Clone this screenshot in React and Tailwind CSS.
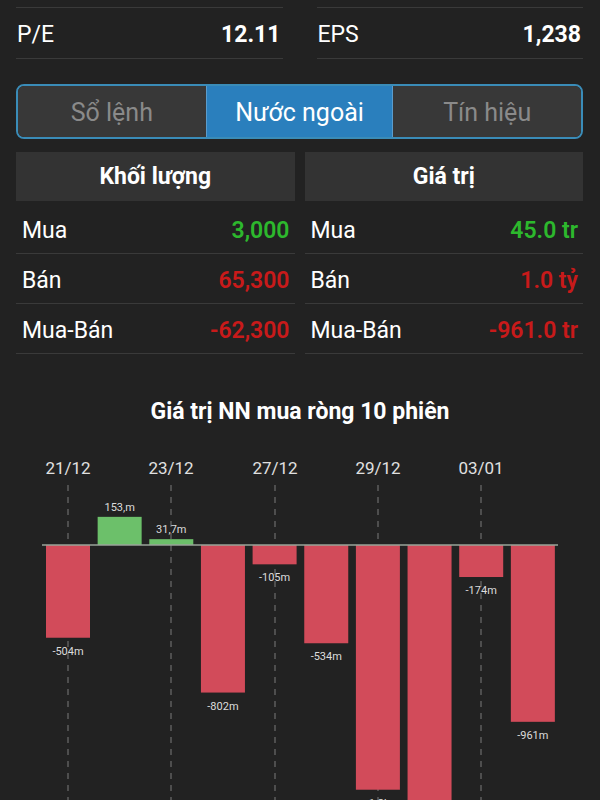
const STATS = [
  { label: 'P/E', value: '12.11' },
  { label: 'EPS', value: '1,238' },
];

const TABS = ['Sổ lệnh', 'Nước ngoài', 'Tín hiệu'];

const TABLES = [
  {
    title: 'Khối lượng',
    rows: [
      { label: 'Mua', value: '3,000', up: true },
      { label: 'Bán', value: '65,300' },
      { label: 'Mua-Bán', value: '-62,300' },
    ],
  },
  {
    title: 'Giá trị',
    rows: [
      { label: 'Mua', value: '45.0 tr', up: true },
      { label: 'Bán', value: '1.0 tỷ' },
      { label: 'Mua-Bán', value: '-961.0 tr' },
    ],
  },
];

const DATES = [
  { x: 68, label: '21/12' },
  { x: 171, label: '23/12' },
  { x: 275, label: '27/12' },
  { x: 378, label: '29/12' },
  { x: 481, label: '03/01' },
];

// giá trị theo triệu đồng
const BARS = [
  { v: -504, label: '-504m' },
  { v: 153, label: '153,m' },
  { v: 31.7, label: '31,7m' },
  { v: -802, label: '-802m' },
  { v: -105, label: '-105m' },
  { v: -534, label: '-534m' },
  { v: -1330, label: '-1.3b' },
  { v: -1700, label: '-1.7b' },
  { v: -174, label: '-174m' },
  { v: -961, label: '-961m' },
];

const TOP = 440;
const BASE = 545 - TOP;
const SCALE = 0.184;

function Chart() {
  return (
    <svg width="600" height="360" className="block">
      {DATES.map((d) => (
        <g key={d.label}>
          <text x={d.x} y={34} textAnchor="middle" fill="#e0e0e0" fontSize="17">
            {d.label}
          </text>
          <line x1={d.x} y1={45} x2={d.x} y2={360} stroke="#7a7a7a" strokeWidth="1" strokeDasharray="6 6" />
        </g>
      ))}
      {BARS.map((b, i) => {
        const x = 46 + i * 51.65;
        const h = Math.abs(b.v) * SCALE;
        const up = b.v > 0;
        const y = up ? BASE - h : BASE;
        return (
          <g key={i}>
            <rect x={x} y={y} width={44} height={h} fill={up ? '#6cc06a' : '#d24b5a'} />
            <text
              x={x + 22}
              y={up ? y - 6 : y + h + 17}
              textAnchor="middle"
              fill="#dcdcdc"
              fontSize="11"
            >
              {b.label}
            </text>
          </g>
        );
      })}
      <line x1={42} y1={BASE} x2={558} y2={BASE} stroke="#9aa59a" strokeWidth="1.5" />
    </svg>
  );
}

export default function App() {
  return (
    <div className="w-[600px] h-[800px] overflow-hidden bg-[#222222] text-white font-['Roboto','Liberation_Sans',sans-serif]">
      {/* P/E, EPS */}
      <div className="grid grid-cols-2 gap-[34px] pl-4 pr-[17px] pt-[7px]">
        {STATS.map((s) => (
          <div
            key={s.label}
            className="h-[52px] border-y border-[#3a3a3a] flex items-center justify-between pl-px pr-[2px] pt-[5px]"
          >
            <span className="text-[23px]">{s.label}</span>
            <span className="text-[23px] font-bold">{s.value}</span>
          </div>
        ))}
      </div>

      {/* Tabs */}
      <div className="mx-4 mr-[17px] mt-[25px] h-[55px] border-2 border-[#3a8cb8] rounded-lg overflow-hidden grid grid-cols-3">
        {TABS.map((t, i) => (
          <div
            key={t}
            className={
              i === 1
                ? 'flex items-center justify-center pt-[3px] bg-[#2a7fbd] text-white text-[25px] border-x border-[#5a9ccc]'
                : 'flex items-center justify-center pt-[3px] bg-[#383838] text-[#8a8a8a] text-[25px]'
            }
          >
            {t}
          </div>
        ))}
      </div>

      {/* Khối lượng / Giá trị */}
      <div className="grid grid-cols-2 gap-[10px] pl-4 pr-[17px] mt-[13px]">
        {TABLES.map((tb) => (
          <div key={tb.title}>
            <div className="h-[49px] bg-[#333333] flex items-center justify-center pt-[2px] text-[23px] font-bold">
              {tb.title}
            </div>
            <div className="mt-[3px]">
              {tb.rows.map((r) => (
                <div
                  key={r.label}
                  className="h-[50px] border-b border-[#3a3a3a] flex items-center justify-between pl-[6px] pr-[5px] pt-[6px]"
                >
                  <span className="text-[23px]">{r.label}</span>
                  <span
                    className={
                      r.up ? 'text-[23px] font-semibold text-[#2db82d]' : 'text-[23px] font-semibold text-[#c81a1a]'
                    }
                  >
                    {r.value}
                  </span>
                </div>
              ))}
            </div>
          </div>
        ))}
      </div>

      {/* Chart */}
      <div className="mt-[43px] text-center text-[23px] font-bold leading-[30px]">
        Giá trị NN mua ròng 10 phiên
      </div>
      <div className="mt-[13px]">
        <Chart />
      </div>
    </div>
  );
}
